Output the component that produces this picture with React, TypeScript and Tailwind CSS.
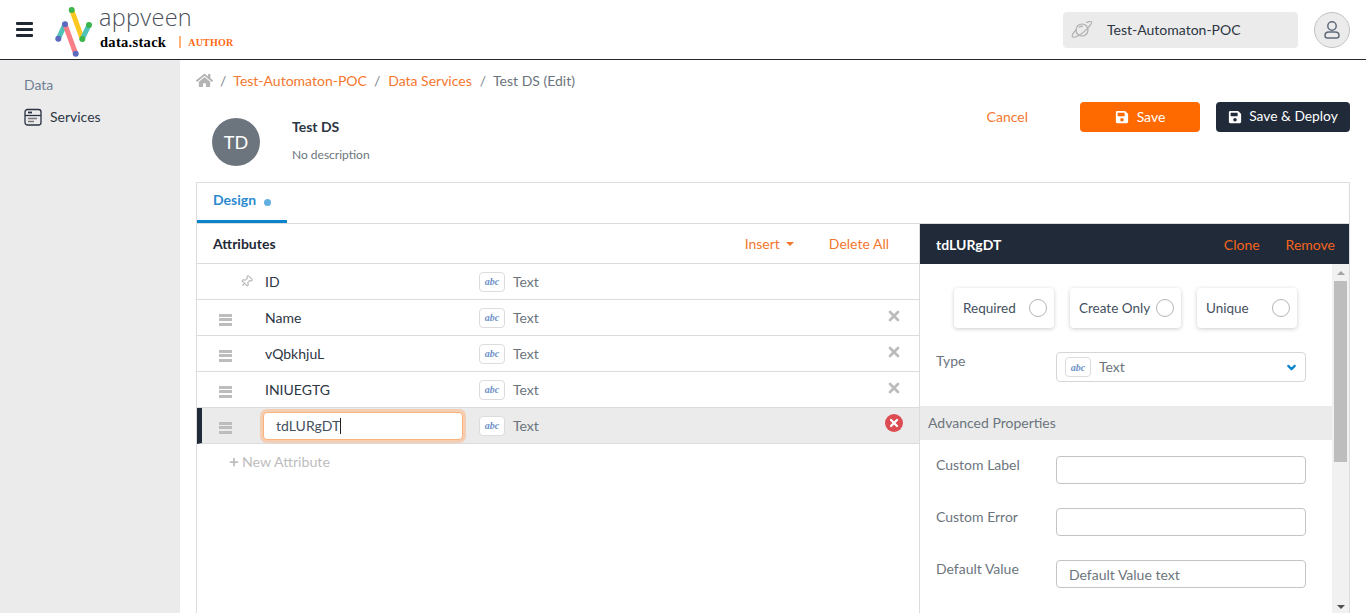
import React from 'react';
import { Pin, ChevronDown, Plus, X } from 'lucide-react';
import { FaHome, FaSave } from 'react-icons/fa';

const ATTRS = ['Name', 'vQbkhjuL', 'INIUEGTG'];

const AbcBadge = () => (
  <span className="flex h-[20px] w-[26px] shrink-0 items-center justify-center rounded-[4px] border border-[#dcdcdc] bg-white font-['Liberation_Serif',serif] text-[10px] font-bold italic text-[#6f93c8]">
    abc
  </span>
);

const DragHandle = () => (
  <div className="mt-[4px] flex w-[13px] flex-col gap-[1.5px]">
    <div className="h-[3px] bg-[#bdbdbd]" />
    <div className="h-[3px] bg-[#bdbdbd]" />
    <div className="h-[3px] bg-[#bdbdbd]" />
  </div>
);

const Logo = () => (
  <svg width="46" height="58" viewBox="50 0 46 58" className="shrink-0">
    <g fill="none" strokeWidth="5" strokeLinecap="round">
      <path d="M58.3 37.7 65 23.3" stroke="#4fc3b8" />
      <path d="M65 23.3 75.7 52.7" stroke="#f87f85" />
      <path d="M71.7 9 82.3 38" stroke="#fcc820" />
      <path d="M82.3 38 89 24" stroke="#4fc3b8" />
    </g>
    <circle cx="58.3" cy="37.7" r="3" fill="#5c6bc0" />
    <circle cx="65" cy="23.3" r="3" fill="#5c6bc0" />
    <circle cx="75.7" cy="52.7" r="3" fill="#5c6bc0" />
    <circle cx="71.7" cy="9" r="3" fill="#3cb54a" />
    <circle cx="82.3" cy="38" r="3" fill="#3cb54a" />
    <circle cx="89" cy="24" r="3" fill="#3cb54a" />
  </svg>
);

const PlanetIcon = () => (
  <svg width="22" height="18" viewBox="0 0 22 18" fill="none" stroke="#b0b0b0" strokeWidth="1.2">
    <circle cx="11" cy="9" r="6" />
    <path d="M5.5 8.5C2.5 11.5.5 14.5 1.5 15.8c1.4 1.4 7-.9 12-5.4s8-9 7-9.9c-.7-.8-2.8-.1-5.3 1.3" />
    <path d="M8 6.5c1-1 2.5-1.5 4-1.2" />
  </svg>
);

const ServicesIcon = () => (
  <svg width="18" height="18" viewBox="0 0 18 18" fill="none" stroke="#2a3342" strokeWidth="1.3">
    <rect x="1" y="1.5" width="16" height="15.5" rx="2.5" />
    <path d="M1 7.5h16" />
    <path d="M4 4.5h4" strokeWidth="1.8" />
    <path d="M4 10.5h9M4 13.5h6" stroke="#777" />
  </svg>
);

const UserIcon = () => (
  <svg width="20" height="20" viewBox="0 0 20 20" fill="none" stroke="#5f6b7a" strokeWidth="1.5">
    <circle cx="10" cy="6" r="4.2" />
    <path d="M3 15.5c0-2.2 2-3.4 4-3.4h6c2 0 4 1.2 4 3.4 0 1.6-1 2.5-2.4 2.5H5.4C4 18 3 17.1 3 15.5Z" />
  </svg>
);

const ToggleCard = ({ label, width }: { label: string; width: string }) => (
  <div className={`flex h-[40px] items-center justify-between rounded-[4px] bg-white pl-[9px] pr-[7px] shadow-[0_1px_4px_rgba(0,0,0,0.2)] ${width}`}>
    <span className="text-[13.5px] text-[#44505e]">{label}</span>
    <span className="h-[18px] w-[18px] rounded-full border border-[#b5b5b5] bg-white" />
  </div>
);

const Field = ({ label, children, mb }: { label: string; children: React.ReactNode; mb: string }) => (
  <div className={`flex items-start pl-[16px] ${mb}`}>
    <span className="mt-[-1px] w-[120px] text-[14px] leading-[20px] text-[#6c757d]">{label}</span>
    {children}
  </div>
);

const TextBox = ({ value }: { value?: string }) => (
  <div className="flex h-[28px] w-[250px] items-center rounded-[4px] border border-[#c4c4c4] bg-white px-[12px] text-[14px] text-[#6c757d]">
    {value}
  </div>
);

export default function App() {
  return (
    <div className="flex h-[613px] w-[1366px] flex-col overflow-hidden bg-white font-['Lato',sans-serif] text-[#44505e]">
      {/* Header */}
      <header className="flex h-[60px] shrink-0 items-center border-b border-[#22272e] bg-white pl-[16px] pr-[16px]">
        <div className="flex w-[17px] flex-col gap-[3px]">
          <div className="h-[3px] rounded-[1px] bg-[#202833]" />
          <div className="h-[3px] rounded-[1px] bg-[#202833]" />
          <div className="h-[3px] rounded-[1px] bg-[#202833]" />
        </div>
        <div className="ml-[17px]">
          <Logo />
        </div>
        <div className="ml-[3px] flex flex-col pb-[5px]">
          <span className="text-[23.5px] leading-[26px] tracking-[0.3px] font-light text-[#4a4f57] font-['Open_Sans',sans-serif]">appveen</span>
          <div className="mt-[3px] flex items-center">
            <span className="ml-[1px] font-['Liberation_Serif',serif] text-[14.5px] leading-[16px] font-bold tracking-[0.3px] text-black">data.stack</span>
            <span className="ml-[13px] h-[12px] w-[2px] bg-[#fdb27c]" />
            <span className="ml-[7px] mt-[2px] font-['Liberation_Serif',serif] text-[10px] leading-[16px] font-bold tracking-[0.2px] text-[#ff6a14]">AUTHOR</span>
          </div>
        </div>
        <div className="ml-auto flex items-center">
          <div className="flex h-[36px] w-[235px] items-center rounded-[4px] bg-[#ebebeb] pl-[8px] text-[14px] text-[#2c3644]">
            <PlanetIcon />
            <span className="ml-[14px]">Test-Automaton-POC</span>
          </div>
          <div className="ml-[16px] flex h-[36px] w-[36px] items-center justify-center rounded-full border border-[#c2c2c2] bg-[#ebebeb]">
            <UserIcon />
          </div>
        </div>
      </header>

      <div className="flex min-h-0 flex-1">
        {/* Sidebar */}
        <aside className="w-[180px] shrink-0 bg-[#ebebeb] pl-[24px] pt-[16px]">
          <div className="text-[14px] leading-[18px] text-[#6f7f92]">Data</div>
          <div className="mt-[14px] flex items-center text-[14px] leading-[18px] text-[#2c3644]">
            <ServicesIcon />
            <span className="ml-[8px]">Services</span>
          </div>
        </aside>

        {/* Main */}
        <main className="flex min-w-0 flex-1 flex-col pl-[16px] pr-[16px]">
          <nav className="mt-[10px] flex h-[20px] items-center text-[14px] text-[#6c757d]">
            <FaHome size={17} className="text-[#b4b4b4]" />
            <span className="ml-[7px] text-[#7b8490]">/</span>
            <span className="ml-[7px] text-[#f4772e]">Test-Automaton-POC</span>
            <span className="ml-[7px] text-[#7b8490]">/</span>
            <span className="ml-[8px] text-[#f4772e]">Data Services</span>
            <span className="ml-[8px] text-[#7b8490]">/</span>
            <span className="ml-[7px]">Test DS (Edit)</span>
          </nav>

          <div className="flex h-[92px] shrink-0">
            <div className="ml-[16px] mt-[28px] flex h-[48px] w-[48px] items-center justify-center rounded-full bg-[#6c757d] text-[18px] text-white">
              TD
            </div>
            <div className="ml-[32px] mt-[27px]">
              <div className="text-[14px] leading-[20px] font-bold text-[#2c3644]">Test DS</div>
              <div className="mt-[10px] text-[12px] leading-[16px] text-[#6c757d]">No description</div>
            </div>
            <div className="ml-auto mt-[12px] flex h-[30px] items-center text-[14px]">
              <span className="mb-[2px] mr-[52px] text-[#f4772e]">Cancel</span>
              <button className="flex h-[30px] w-[120px] items-center justify-center rounded-[4px] bg-[#ff6a00] text-white">
                <FaSave size={14} className="text-white" />
                <span className="mb-[2px] ml-[8px]">Save</span>
              </button>
              <button className="ml-[16px] flex h-[30px] w-[134px] items-center justify-center rounded-[4px] bg-[#202a38] text-white">
                <FaSave size={14} className="text-white" />
                <span className="mb-[2px] ml-[7px] text-[13.8px]">Save &amp; Deploy</span>
              </button>
            </div>
          </div>

          {/* Card */}
          <section className="flex min-h-0 flex-1 flex-col border border-b-0 border-[#dcdcdc] bg-white">
            <div className="flex h-[41px] shrink-0 border-b border-[#dcdcdc]">
              <div className="flex h-[40px] w-[90px] items-start border-b-[3px] border-[#0a84cc] pl-[16px] pt-[7px]">
                <span className="text-[14px] leading-[20px] font-bold text-[#2d8ad0]">Design</span>
                <span className="ml-[8px] mt-[9px] h-[7px] w-[7px] rounded-full bg-[#62b0e0]" />
              </div>
            </div>
            <div className="flex min-h-0 flex-1">
              {/* Attributes */}
              <div className="w-[723px] shrink-0 border-r border-[#dcdcdc]">
                <div className="flex h-[40px] items-center border-b border-[#dcdcdc] pl-[16px] pr-[30px] text-[14px]">
                  <span className="font-bold text-[#1f2937]">Attributes</span>
                  <span className="ml-auto flex items-center text-[#f4772e]">
                    Insert
                    <svg width="8" height="4" viewBox="0 0 8 4" className="ml-[6px]"><path d="M0 0h8L4 4Z" fill="#f4772e" /></svg>
                  </span>
                  <span className="ml-[35px] text-[#f4772e]">Delete All</span>
                </div>
                <div className="flex h-[36px] items-center border-b border-[#dcdcdc] text-[14px]">
                  <div className="flex w-[68px] justify-end pr-[12px]">
                    <Pin size={13} className="rotate-45 text-[#b4b4b4]" />
                  </div>
                  <span className="w-[214px] text-[#2c3644]">ID</span>
                  <AbcBadge />
                  <span className="ml-[8px] text-[#6c757d]">Text</span>
                </div>
                {ATTRS.map(name => (
                  <div key={name} className="flex h-[36px] items-center border-b border-[#dcdcdc] text-[14px]">
                    <div className="ml-[22px] w-[46px]">
                      <DragHandle />
                    </div>
                    <span className="w-[214px] text-[#2c3644]">{name}</span>
                    <AbcBadge />
                    <span className="ml-[8px] text-[#6c757d]">Text</span>
                    <X size={16} strokeWidth={4} className="ml-auto mr-[17px] mb-[4px] text-[#bcbcbc]" />
                  </div>
                ))}
                <div className="flex h-[36px] items-center border-b border-l-[5px] border-b-[#dcdcdc] border-l-[#202a38] bg-[#ebebeb] text-[14px]">
                  <div className="ml-[17px] w-[44px]">
                    <DragHandle />
                  </div>
                  <div className="flex h-[28px] w-[200px] items-center rounded-[4px] border border-[#fdb27c] bg-white pl-[12px] text-[#44505e] shadow-[0_0_0_3px_rgba(253,178,124,0.5)]">
                    tdLURgDT
                    <span className="h-[16px] w-px bg-[#222]" />
                  </div>
                  <div className="ml-[16px]"><AbcBadge /></div>
                  <span className="ml-[8px] text-[#6c757d]">Text</span>
                  <span className="ml-auto mr-[16px] mb-[6px] flex h-[18px] w-[18px] items-center justify-center rounded-full bg-[#dc4c52]">
                    <X size={12} strokeWidth={4.5} className="text-white" />
                  </span>
                </div>
                <div className="flex h-[36px] items-center pl-[31px] text-[14px] text-[#bdbdbd]">
                  <Plus size={12} strokeWidth={3.5} />
                  <span className="ml-[2px] text-[14.2px]">New Attribute</span>
                </div>
              </div>

              {/* Properties */}
              <div className="flex min-w-0 flex-1 flex-col">
                <div className="flex h-[40px] shrink-0 items-center bg-[#202a38] pl-[16px] pr-[14px] text-[14px]">
                  <span className="font-bold text-white">tdLURgDT</span>
                  <span className="ml-auto text-[#f4641e]">Clone</span>
                  <span className="ml-[26px] text-[#f4641e]">Remove</span>
                </div>
                <div className="flex min-h-0 flex-1">
                  <div className="min-w-0 flex-1">
                    <div className="flex gap-[16px] pl-[34px] pt-[24px]">
                      <ToggleCard label="Required" width="w-[100px]" />
                      <ToggleCard label="Create Only" width="w-[111px]" />
                      <ToggleCard label="Unique" width="w-[100px]" />
                    </div>
                    <div className="mt-[24px]">
                      <Field label="Type" mb="mb-[24px]">
                        <div className="flex h-[30px] w-[250px] items-center rounded-[4px] border border-[#d6d6d6] bg-white pl-[8px] pr-[7px] text-[14px] text-[#6c757d]">
                          <AbcBadge />
                          <span className="ml-[8px] mt-[-1px]">Text</span>
                          <ChevronDown size={13} strokeWidth={4} className="ml-auto text-[#0a84cc]" />
                        </div>
                      </Field>
                    </div>
                    <div className="flex h-[34px] items-center bg-[#ebebeb] pb-[2px] pl-[8px] text-[14px] text-[#6c757d]">Advanced Properties</div>
                    <div className="pt-[16px]">
                      <Field label="Custom Label" mb="mb-[24px]"><TextBox /></Field>
                      <Field label="Custom Error" mb="mb-[24px]"><TextBox /></Field>
                      <Field label="Default Value" mb="mb-0"><TextBox value="Default Value text" /></Field>
                    </div>
                  </div>
                  {/* Scrollbar */}
                  <div className="flex w-[17px] shrink-0 flex-col items-center bg-[#f1f1f1]">
                    <svg width="8" height="4" viewBox="0 0 8 4" className="mt-[7px]"><path d="M4 0l4 4H0Z" fill="#a3a3a3" /></svg>
                    <div className="mt-[6px] h-[181px] w-[13px] bg-[#bdbdbd]" />
                    <svg width="8" height="4" viewBox="0 0 8 4" className="mt-auto mb-[4px]"><path d="M0 0h8L4 4Z" fill="#505050" /></svg>
                  </div>
                </div>
              </div>
            </div>
          </section>
        </main>
      </div>
    </div>
  );
}
